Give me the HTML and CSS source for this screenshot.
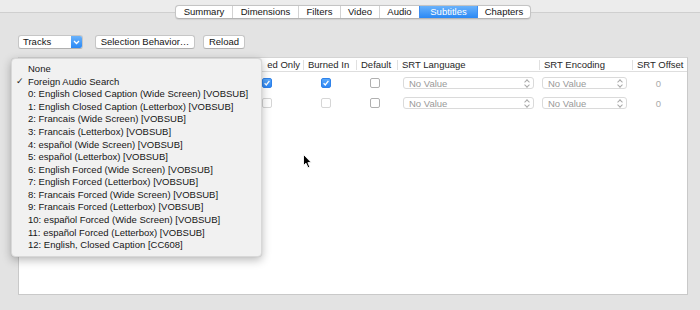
FILE: index.html
```html
<!DOCTYPE html>
<html>
<head>
<meta charset="utf-8">
<link rel="stylesheet" href="styles.css">
</head>
<body>
<div class="window">
  <div class="tabview">
    <div class="tabs">
      <span class="tab t-summary">Summary</span>
      <span class="tab t-dim">Dimensions</span>
      <span class="tab t-filters">Filters</span>
      <span class="tab t-video">Video</span>
      <span class="tab t-audio">Audio</span>
      <span class="tab t-subs selected">Subtitles</span>
      <span class="tab t-chap">Chapters</span>
    </div>
    <div class="toolbar">
      <div class="popup-btn">
        <span class="pb-label">Tracks</span>
        <span class="pb-arrow"><svg width="7" height="5" viewBox="0 0 7 5"><path d="M1 1 L3.5 3.5 L6 1" fill="none" stroke="#fff" stroke-width="1.3"/></svg></span>
      </div>
      <div class="btn btn-sel">Selection Behavior…</div>
      <div class="btn btn-reload">Reload</div>
    </div>
    <div class="table">
      <div class="row thead">
        <div class="hc c-track"></div>
        <div class="hc c-forced"><span class="hidden-part">Forc</span>ed Only</div>
        <div class="hc c-burned">Burned In</div>
        <div class="hc c-default">Default</div>
        <div class="hc c-lang">SRT Language</div>
        <div class="hc c-enc">SRT Encoding</div>
        <div class="hc c-off">SRT Offset</div>
      </div>
      <div class="body">
        <div class="row">
          <div class="cell c-track"></div>
          <div class="cell cb cb-forced"><span class="check on"><svg width="8" height="8" viewBox="0 0 8 8"><path d="M1.6 4.2 L3.3 5.9 L6.4 1.8" fill="none" stroke="#fff" stroke-width="1.3"/></svg></span></div>
          <div class="cell cb cb-burned"><span class="check on"><svg width="8" height="8" viewBox="0 0 8 8"><path d="M1.6 4.2 L3.3 5.9 L6.4 1.8" fill="none" stroke="#fff" stroke-width="1.3"/></svg></span></div>
          <div class="cell cb cb-default"><span class="check"></span></div>
          <div class="cell"><div class="vpop pop-lang"><span>No Value</span><span class="ud"></span></div></div>
          <div class="cell"><div class="vpop pop-enc"><span>No Value</span><span class="ud"></span></div></div>
          <div class="cell offset">0</div>
        </div>
        <div class="row">
          <div class="cell c-track"></div>
          <div class="cell cb cb-forced"><span class="check dim"></span></div>
          <div class="cell cb cb-burned"><span class="check dim"></span></div>
          <div class="cell cb cb-default"><span class="check"></span></div>
          <div class="cell"><div class="vpop pop-lang"><span>No Value</span><span class="ud"></span></div></div>
          <div class="cell"><div class="vpop pop-enc"><span>No Value</span><span class="ud"></span></div></div>
          <div class="cell offset">0</div>
        </div>
      </div>
    </div>
  </div>

  <div class="menu">
    <div class="mi"><span class="mk"></span>None</div>
    <div class="mi"><span class="mk">✓</span>Foreign Audio Search</div>
    <div class="mi"><span class="mk"></span>0: English Closed Caption (Wide Screen) [VOBSUB]</div>
    <div class="mi"><span class="mk"></span>1: English Closed Caption (Letterbox) [VOBSUB]</div>
    <div class="mi"><span class="mk"></span>2: Francais (Wide Screen) [VOBSUB]</div>
    <div class="mi"><span class="mk"></span>3: Francais (Letterbox) [VOBSUB]</div>
    <div class="mi"><span class="mk"></span>4: español (Wide Screen) [VOBSUB]</div>
    <div class="mi"><span class="mk"></span>5: español (Letterbox) [VOBSUB]</div>
    <div class="mi"><span class="mk"></span>6: English Forced (Wide Screen) [VOBSUB]</div>
    <div class="mi"><span class="mk"></span>7: English Forced (Letterbox) [VOBSUB]</div>
    <div class="mi"><span class="mk"></span>8: Francais Forced (Wide Screen) [VOBSUB]</div>
    <div class="mi"><span class="mk"></span>9: Francais Forced (Letterbox) [VOBSUB]</div>
    <div class="mi"><span class="mk"></span>10: español Forced (Wide Screen) [VOBSUB]</div>
    <div class="mi"><span class="mk"></span>11: español Forced (Letterbox) [VOBSUB]</div>
    <div class="mi"><span class="mk"></span>12: English, Closed Caption [CC608]</div>
  </div>

  <svg class="cursor" width="10" height="15" viewBox="0 0 10 15">
    <path d="M0.5 0.5 L0.5 11.5 L3 9.2 L5 13.8 L6.8 13 L4.9 8.6 L8.3 8.6 Z" fill="#000" stroke="#fff" stroke-width="0.9"/>
  </svg>
</div>
</body>
</html>
```

FILE: styles.css
```css
* { box-sizing: border-box; }
html, body { margin: 0; padding: 0; }
body {
  width: 700px;
  height: 310px;
  overflow: hidden;
  font-family: "Liberation Sans", Arial, sans-serif;
  font-size: 9.5px;
  color: #222;
}
.window {
  position: relative;
  width: 700px;
  height: 310px;
  background: #ececec;
  overflow: hidden;
}
.tabview {
  margin-top: 12px;
  height: 298px;
  border-top: 1px solid #cfcfcf;
  background: #e3e3e3;
  padding-left: 18px;
}
.tabs {
  display: flex;
  margin-top: -8px;
  margin-left: 157px;
  width: 356px;
  height: 14px;
  border: 1px solid #c4c4c4;
  border-bottom-color: #b4b4b4;
  border-radius: 4px;
  background: #fff;
  box-shadow: 0 0.5px 1px rgba(0,0,0,0.08);
  overflow: hidden;
}
.tab {
  display: flex;
  align-items: center;
  justify-content: center;
  height: 100%;
  border-left: 1px solid #d2d2d2;
  color: #141414;
  line-height: 1;
}
.tab:first-child { border-left: none; }
.t-summary { width: 56px; }
.t-dim { width: 66px; }
.t-filters { width: 42px; }
.t-video { width: 39px; }
.t-audio { width: 40px; }
.t-subs { width: 58px; }
.t-chap { flex: 1; }
.tab.selected {
  background: linear-gradient(#6ab2fb, #2a88f5);
  color: #fff;
  border-left-color: #3d8ef2;
}
.tab.selected + .tab { border-left-color: #3d8ef2; }

.toolbar {
  display: flex;
  align-items: center;
  margin-top: 16px;
  height: 14px;
}
.popup-btn {
  display: flex;
  width: 65px;
  height: 14px;
  border: 1px solid #c6c6c6;
  border-bottom-color: #b0b0b0;
  border-radius: 3px;
  background: #fff;
  overflow: hidden;
}
.pb-label {
  flex: 1;
  padding-left: 4px;
  line-height: 12px;
  color: #141414;
}
.pb-arrow {
  width: 11px;
  display: flex;
  align-items: center;
  justify-content: center;
  background: linear-gradient(#6ab2fb, #2a88f5);
}
.btn {
  height: 14px;
  border: 1px solid #c6c6c6;
  border-bottom-color: #b0b0b0;
  border-radius: 3px;
  background: #fff;
  line-height: 12px;
  text-align: center;
  color: #141414;
}
.btn-sel { margin-left: 12px; width: 100px; }
.btn-reload { margin-left: 8px; width: 42px; }

.table {
  margin-top: 8px;
  width: 670px;
  height: 238px;
  background: #fff;
  border: 1px solid #c9c9c9;
  border-top-color: #d4d4d4;
}
.row {
  display: grid;
  grid-template-columns: 225px 59px 53px 41px 142px 93px 1fr;
}
.thead {
  height: 14px;
  border-bottom: 1px solid #dedede;
}
.hc {
  display: flex;
  align-items: center;
  padding-left: 4px;
  border-left: 1px solid #e0e0e0;
  margin: 2px 0 1px;
  color: #262626;
  line-height: 1;
  white-space: nowrap;
}
.hc.c-track { border-left: none; }
.hc.c-forced { padding-left: 0; justify-content: flex-end; padding-right: 3px; }
.hidden-part { visibility: hidden; }
.body { padding-top: 1px; }
.body .row { height: 20px; }
.cell {
  display: flex;
  align-items: center;
}
.cb { justify-content: center; }
.cb-forced { padding-right: 13px; }
.cb-burned { padding-right: 7px; }
.cb-default { padding-right: 3px; }
.check {
  display: flex;
  align-items: center;
  justify-content: center;
  width: 10px;
  height: 10px;
  border: 1px solid #b0b0b0;
  border-radius: 2px;
  background: #fff;
}
.check.on {
  background: linear-gradient(#5aa8fa, #2d86f4);
  border-color: #2f82ea;
}
.check.dim { border-color: #d6d6d6; }
.vpop {
  display: flex;
  align-items: center;
  justify-content: space-between;
  height: 12px;
  border: 1px solid #dadada;
  border-radius: 3px;
  background: #fff;
  padding: 0 3px 0 5px;
  color: #999;
}
.pop-lang { margin-left: 6px; width: 131px; }
.pop-enc { margin-left: 3px; width: 85px; }
.ud {
  display: inline-block;
  width: 6px;
  height: 8px;
  position: relative;
}
.ud::before, .ud::after {
  content: "";
  position: absolute;
  left: 1px;
  width: 3px;
  height: 3px;
  border-left: 1px solid #a8a8a8;
  border-top: 1px solid #a8a8a8;
}
.ud::before { top: 1px; transform: rotate(45deg); }
.ud::after { top: 3.5px; transform: rotate(-135deg); }
.offset {
  justify-content: center;
  color: #aaa;
  padding-right: 2px;
}

.menu {
  position: absolute;
  left: 11px;
  top: 58px;
  width: 251px;
  height: 199px;
  padding-top: 3.7px;
  background: #f1f1f1;
  border: 1px solid #d8d8d8;
  border-radius: 4px;
  box-shadow: 0 3px 10px rgba(0,0,0,0.28), 0 0 1px rgba(0,0,0,0.15);
}
.mi {
  display: flex;
  align-items: center;
  height: 12.57px;
  padding-left: 4px;
  color: #161616;
  white-space: nowrap;
  line-height: 1;
}
.mk {
  width: 12px;
  font-size: 9px;
  color: #222;
}
.cursor {
  position: absolute;
  left: 303px;
  top: 154px;
}
```
